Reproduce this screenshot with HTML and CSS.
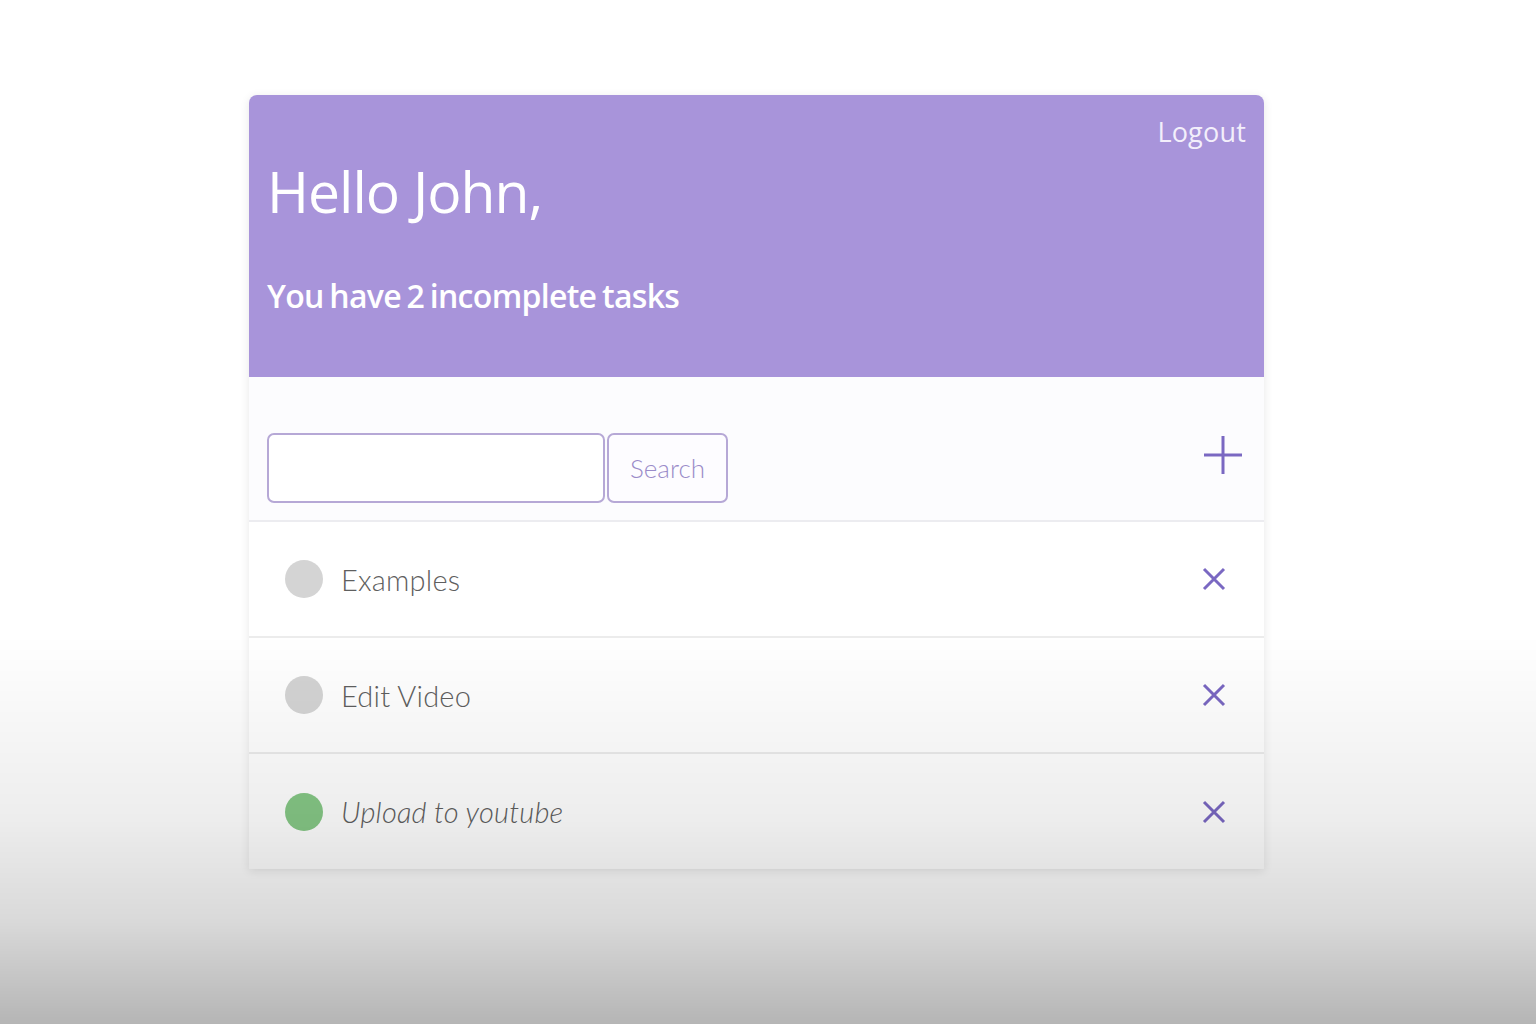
FILE: index.html
```html
<!DOCTYPE html>
<html>
<head>
<meta charset="utf-8">
<link rel="stylesheet" href="styles.css">
</head>
<body>
<div class="page">
  <div class="card">
    <header class="header">
      <div class="logout">Logout</div>
      <h1 class="hello">Hello John,</h1>
      <p class="summary">You have 2 incomplete tasks</p>
    </header>
    <div class="toolbar">
      <div class="search">
        <input class="search-input" type="text">
        <button class="search-btn">Search</button>
      </div>
      <svg class="plus" width="42" height="42" viewBox="0 0 42 42"><path d="M21 2v38M2 21h38" stroke="#7a68c2" stroke-width="3" fill="none"/></svg>
    </div>
    <ul class="tasks">
      <li class="task">
        <span class="dot"></span>
        <span class="task-text">Examples</span>
        <svg class="close" width="24" height="24" viewBox="0 0 24 24"><path d="M2 2l20 20M22 2L2 22" stroke="#7a68c2" stroke-width="3" fill="none"/></svg>
      </li>
      <li class="task">
        <span class="dot"></span>
        <span class="task-text">Edit Video</span>
        <svg class="close" width="24" height="24" viewBox="0 0 24 24"><path d="M2 2l20 20M22 2L2 22" stroke="#7a68c2" stroke-width="3" fill="none"/></svg>
      </li>
      <li class="task done">
        <span class="dot"></span>
        <span class="task-text">Upload to youtube</span>
        <svg class="close" width="24" height="24" viewBox="0 0 24 24"><path d="M2 2l20 20M22 2L2 22" stroke="#7a68c2" stroke-width="3" fill="none"/></svg>
      </li>
    </ul>
  </div>
</div>
<div class="shade"></div>
</body>
</html>
```

FILE: styles.css
```css
html, body {
  margin: 0;
  padding: 0;
  height: 100%;
  background: #ffffff;
  font-family: "Open Sans", "Noto Sans", sans-serif;
  overflow: hidden;
}

.page {
  padding-top: 95px;
  padding-left: 249px;
}

.card {
  width: 1015px;
  background: #ffffff;
  border-radius: 8px 8px 0 0;
  box-shadow: 0 2px 10px rgba(0, 0, 0, 0.10);
}

.header {
  box-sizing: border-box;
  height: 282px;
  background: #a894da;
  border-radius: 8px 8px 0 0;
  padding: 19px 18px 0 18px;
  color: #ffffff;
  display: flex;
  flex-direction: column;
}

.logout {
  align-self: flex-end;
  font-size: 27px;
  line-height: 36px;
  letter-spacing: 0.2px;
  color: #f3effb;
}

.hello {
  margin: 6px 0 0 0;
  font-size: 57px;
  line-height: 70px;
  font-weight: 400;
  letter-spacing: -1px;
}

.summary {
  margin: 50px 0 0 0;
  font-size: 32px;
  line-height: 40px;
  font-weight: 600;
  letter-spacing: -0.7px;
  word-spacing: -2px;
}

.toolbar {
  box-sizing: border-box;
  height: 145px;
  background: #fcfcfe;
  border-bottom: 2px solid #ececf0;
  display: flex;
  align-items: center;
  justify-content: space-between;
  padding: 0 20px 0 18px;
}

.search {
  display: flex;
  gap: 2px;
  margin-top: 39px;
}

.search-input {
  box-sizing: border-box;
  width: 338px;
  height: 70px;
  border: 2px solid #b6a8d6;
  border-radius: 7px;
  background: #ffffff;
  margin: 0;
  outline: none;
}

.search-btn {
  box-sizing: border-box;
  width: 121px;
  height: 70px;
  border: 2px solid #b6a8d6;
  border-radius: 7px;
  background: #fdfcff;
  color: #9a8bc9;
  font-family: "Lato", "Open Sans", sans-serif;
  font-size: 26px;
  font-weight: 300;
  margin: 0;
  padding: 0;
}

.plus {
  display: block;
  margin-top: 12px;
}

.tasks {
  list-style: none;
  margin: 0;
  padding: 0;
}

.task {
  box-sizing: border-box;
  height: 116px;
  display: flex;
  align-items: center;
  padding: 0 38px 0 36px;
  border-bottom: 2px solid #ececec;
  background: #ffffff;
}

.task:last-child {
  border-bottom: none;
  height: 115px;
}

.dot {
  width: 38px;
  height: 38px;
  border-radius: 50%;
  background: #d4d4d4;
  flex: none;
}

.done .dot {
  background: #86c886;
}

.task-text {
  flex: 1;
  margin-left: 18px;
  font-family: "Lato", "Open Sans", sans-serif;
  font-size: 29px;
  font-weight: 300;
  color: #5f5f5f;
  letter-spacing: 0.2px;
}

.done .task-text {
  font-style: italic;
}

.close {
  display: block;
  flex: none;
}

.shade {
  position: fixed;
  left: 0;
  top: 0;
  width: 100%;
  height: 100%;
  pointer-events: none;
  background: linear-gradient(to bottom, rgba(0,0,0,0) 62%, rgba(0,0,0,0.07) 80%, rgba(0,0,0,0.15) 90%, rgba(0,0,0,0.29) 100%);
}
```
